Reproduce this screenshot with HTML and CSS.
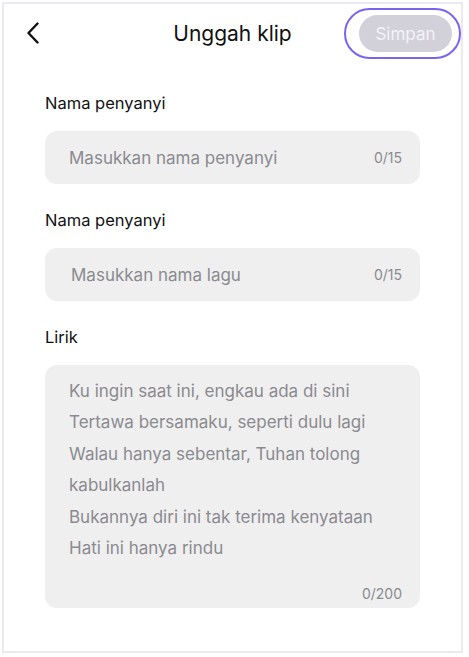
FILE: index.html
```html
<!DOCTYPE html>
<html lang="id">
<head>
<meta charset="utf-8">
<title>Unggah klip</title>
<link rel="stylesheet" href="styles.css">
</head>
<body>
<div class="frame">
  <header class="header">
    <button class="back" aria-label="Kembali">
      <svg width="14" height="22" viewBox="0 0 14 22"><path d="M11.5 1.5 L2.5 11 L11.5 20.5" fill="none" stroke="#111" stroke-width="2.4" stroke-linecap="round" stroke-linejoin="round"/></svg>
    </button>
    <h1 class="title">Unggah klip</h1>
    <div class="save-wrap">
      <button class="save">Simpan</button>
      <span class="ring"></span>
    </div>
  </header>
  <main class="form">
    <section class="field">
      <label class="label">Nama penyanyi</label>
      <div class="input">
        <span class="placeholder">Masukkan nama penyanyi</span>
        <span class="count">0/15</span>
      </div>
    </section>
    <section class="field">
      <label class="label">Nama penyanyi</label>
      <div class="input">
        <span class="placeholder shift">Masukkan nama lagu</span>
        <span class="count">0/15</span>
      </div>
    </section>
    <section class="field">
      <label class="label">Lirik</label>
      <div class="textarea">
        <p class="lyrics">Ku ingin saat ini, engkau ada di sini<br>Tertawa bersamaku, seperti dulu lagi<br>Walau hanya sebentar, Tuhan tolong<br>kabulkanlah<br>Bukannya diri ini tak terima kenyataan<br>Hati ini hanya rindu</p>
        <span class="count big">0/200</span>
      </div>
    </section>
  </main>
</div>
</body>
</html>
```
FILE: styles.css
```css
* { box-sizing: border-box; }
html, body { margin: 0; padding: 0; background: #fff; }
body {
  font-family: Inter, "Noto Sans", sans-serif;
  width: 469px;
  height: 657px;
  padding: 2px 6px 4px 2px;
}
.frame {
  width: 461px;
  height: 651px;
  border: 2px solid #ebe9f4;
  background: #fff;
}
.header {
  height: 60px;
  display: flex;
  align-items: flex-start;
  position: relative;
  padding: 0 0 0 22px;
}
.back {
  border: 0;
  background: none;
  padding: 0;
  width: 14px;
  height: 22px;
  margin-top: 18px;
  display: flex;
}
.title {
  position: absolute;
  left: 0;
  right: 0;
  top: 18px;
  margin: 0;
  text-align: center;
  font-size: 21px;
  line-height: 24px;
  font-weight: 400;
  color: #111;
  pointer-events: none;
}
.save-wrap {
  margin-left: auto;
  margin-right: 9px;
  margin-top: 11px;
  position: relative;
}
.save {
  width: 93px;
  height: 37px;
  border: 0;
  border-radius: 19px;
  background: #d2d1da;
  color: #f3f2f7;
  font-family: Inter, "Noto Sans", sans-serif;
  font-size: 17px;
  display: block;
  padding: 0;
}
.ring {
  position: absolute;
  left: -15px;
  top: -7px;
  width: 117px;
  height: 51px;
  border: 2.5px solid #7b63f2;
  border-radius: 26px;
}
.form {
  padding: 0 41px;
}
.field { margin-top: 26px; }
.field:first-child { margin-top: 29px; }
.label {
  display: block;
  font-size: 16.5px;
  color: #111;
  line-height: 20px;
  height: 20px;
  margin-bottom: 18px;
}
.input {
  height: 53px;
  background: #efefef;
  border-radius: 12px;
  display: flex;
  align-items: center;
  padding: 0 18px 0 24px;
}
.placeholder {
  font-size: 17px;
  color: #8a8a8f;
  flex: 1;
}
.placeholder.shift { padding-left: 2px; }
.count {
  font-size: 14px;
  color: #8a8a8f;
}
.textarea {
  height: 243px;
  background: #efefef;
  border-radius: 12px;
  padding: 11px 18px 0 24px;
  display: flex;
  flex-direction: column;
}
.lyrics {
  margin: 0;
  font-size: 17px;
  line-height: 31.4px;
  color: #8a8a8f;
  white-space: nowrap;
}
.count.big {
  margin-top: auto;
  align-self: flex-end;
  margin-bottom: 6px;
}
```
